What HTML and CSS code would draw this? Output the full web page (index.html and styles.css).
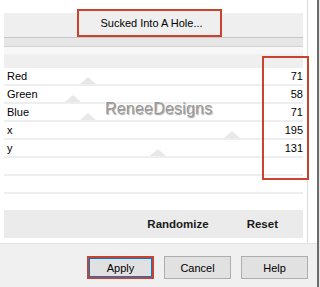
FILE: index.html
```html
<!DOCTYPE html>
<html lang="en">
<head>
    <meta charset="UTF-8">
    <meta name="viewport" content="width=device-width, initial-scale=1.0">
    <title>Sucked Into A Hole</title>
    <link rel="stylesheet" href="styles.css">
</head>
<body>
    <div class="window">
        <div class="dialog">
            <div class="pane">
                <div class="list">
                    <div class="preset">
                        <button class="preset-btn">Sucked Into A Hole...</button>
                    </div>
                    <div class="bar"></div>
                    <div class="row-hidden"></div>

                    <div class="row"><span class="label">Red</span><span class="thumb" style="left: 76px"></span><span class="value">71</span></div>
                    <div class="row"><span class="label">Green</span><span class="thumb" style="left: 61px"></span><span class="value">58</span></div>
                    <div class="row"><span class="label">Blue</span><span class="thumb" style="left: 76px"></span><span class="value">71</span></div>
                    <div class="row"><span class="label">x</span><span class="thumb" style="left: 220px"></span><span class="value">195</span></div>
                    <div class="row"><span class="label">y</span><span class="thumb" style="left: 146px"></span><span class="value">131</span></div>
                    <div class="row"></div>
                    <div class="row"></div>

                    <div class="spacer"></div>
                    <div class="actions">
                        <span>Randomize</span>
                        <span>Reset</span>
                    </div>

                    <div class="watermark">ReneeDesigns</div>
                    <div class="highlight"></div>
                </div>
                <div class="gutter"></div>
            </div>
            <div class="footer">
                <button class="btn btn-default">Apply</button>
                <button class="btn">Cancel</button>
                <button class="btn">Help</button>
            </div>
        </div>
        <div class="edge"></div>
    </div>
</body>
</html>
```

FILE: styles.css
```css
body {
    margin: 0;
    width: 320px;
    height: 287px;
    overflow: hidden;
    background-color: #ffffff;
    font-family: "Liberation Sans", Arial, sans-serif;
    font-size: 11px;
    color: #000;
}

.window {
    display: flex;
    height: 287px;
}

.dialog {
    width: 317px;
    display: flex;
    flex-direction: column;
}

.pane {
    display: flex;
    height: 243px;
    background-color: #ffffff;
}

.list {
    position: relative;
    width: 299px;
    padding: 0 4px;
    border-right: 1px solid #dcdcdc;
}

.gutter {
    flex: 1;
}

/* preset header */
.preset {
    padding-top: 9px;
    box-sizing: border-box;
    height: 37px;
    background: linear-gradient(to bottom, #ffffff 13px, #efefef 13px);
}

.preset-btn {
    display: block;
    margin-left: 73px;
    width: 145px;
    height: 28px;
    border: 2px solid #c9432f;
    background-color: #efefef;
    font-family: inherit;
    font-size: 11px;
    color: #000;
    padding: 0 0 1px 4px;
}

.bar {
    height: 10px;
    box-sizing: border-box;
    background-color: #e6e6e6;
    border-top: 1px solid #c6c6c6;
    border-bottom: 1px solid #d2d2d2;
}

.row-hidden {
    height: 21px;
    background: linear-gradient(to bottom, #f8f8f8 6px, #efefef 8px);
}

/* parameter rows */
.row {
    position: relative;
    display: flex;
    justify-content: space-between;
    height: 16px;
    line-height: 17px;
    padding: 0 0 0 3px;
    border-bottom: 2px solid #eeeeee;
}

.label,
.value {
    position: relative;
    z-index: 1;
}

.thumb {
    position: absolute;
    bottom: 0;
    width: 0;
    height: 0;
    border-left: 8px solid transparent;
    border-right: 8px solid transparent;
    border-bottom: 7px solid #e8e8e8;
}

.spacer {
    height: 16px;
}

.actions {
    display: flex;
    justify-content: flex-end;
    gap: 38px;
    height: 28px;
    line-height: 28px;
    padding-right: 25px;
    background-color: #ebebeb;
    font-size: 11.5px;
    font-weight: bold;
    color: #1a1a1a;
}

/* overlays */
.watermark {
    position: absolute;
    left: 105px;
    top: 101px;
    font-size: 16px;
    line-height: 16px;
    letter-spacing: 0.2px;
    color: #999999;
    text-shadow: -1px -1px 0 #ffffff, 1px 1px 1px #9a9a9a;
    z-index: 2;
}

.highlight {
    position: absolute;
    left: 262px;
    top: 56px;
    width: 47px;
    height: 124px;
    box-sizing: border-box;
    border: 2px solid #c9432f;
    z-index: 3;
}

/* footer buttons */
.footer {
    display: flex;
    justify-content: flex-end;
    align-items: flex-start;
    gap: 10px;
    flex: 1;
    padding: 12px 9px 0 0;
    background-color: #f0f0f0;
    border-top: 1px solid #e2e2e2;
}

.btn {
    width: 67px;
    height: 23px;
    border: 1px solid #adadad;
    background-color: #e1e1e1;
    font-family: inherit;
    font-size: 11px;
    color: #000;
    padding: 0;
}

.btn-default {
    border: 2px solid #c9432f;
    box-shadow: inset 0 0 0 1px #0078d7;
}

.edge {
    width: 3px;
    background: linear-gradient(to right, #6b6b6b 2px, #e4e4e4 2px);
}
```
